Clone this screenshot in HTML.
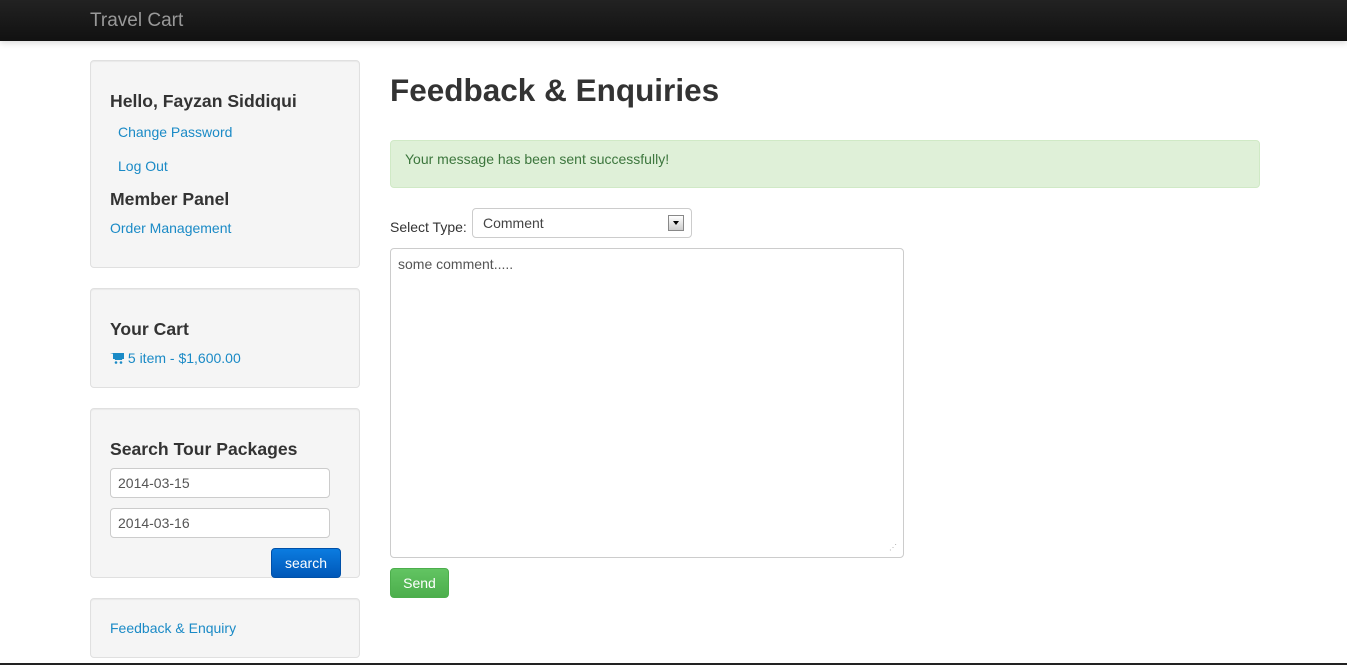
<!DOCTYPE html>
<html><head><style>
*{box-sizing:border-box;margin:0;padding:0}
body{width:1347px;height:665px;overflow:hidden;background:#fff;font-family:"Liberation Sans",Arial,sans-serif;font-size:14px;color:#333;position:relative}
.nav{position:absolute;left:0;top:0;width:1347px;height:41px;background:linear-gradient(#222,#111);box-shadow:0 2px 6px rgba(0,0,0,.15)}
.brand{position:absolute;left:90px;top:9px;font-size:19px;color:#999}
.well{position:absolute;left:90px;width:270px;background:#f5f5f5;border:1px solid #e0e0e0;border-radius:4px;box-shadow:inset 0 1px 1px rgba(0,0,0,.05)}
.abs{position:absolute}
h4{font-size:17.6px;font-weight:bold;color:#333;position:absolute}
a{color:#1a8ac6;text-decoration:none;position:absolute;font-size:14px}
.inp{position:absolute;left:19px;width:220px;height:30px;border:1px solid #ccc;border-radius:4px;background:#fff;padding:6px 7px;font-size:14px;color:#555}
</style></head><body>
<div class="nav"><div class="brand" style="top:10px">Travel Cart</div></div>

<div class="well" style="top:60px;height:208px">
<h4 style="left:19px;top:30px">Hello, Fayzan Siddiqui</h4>
<a style="left:27px;top:63px">Change Password</a>
<a style="left:27px;top:97px">Log Out</a>
<h4 style="left:19px;top:128px">Member Panel</h4>
<a style="left:19px;top:159px">Order Management</a>
</div>

<div class="well" style="top:288px;height:100px">
<h4 style="left:19px;top:30px">Your Cart</h4>
<a style="left:19px;top:61px"><svg width="14" height="12" viewBox="0 0 14 12" style="vertical-align:-1px"><path d="M0 1h3l2 7h7l2-6H4" fill="#1a8ac6"/><rect x="3" y="1" width="11" height="6" fill="#1a8ac6"/><circle cx="6" cy="10.5" r="1.3" fill="#1a8ac6"/><circle cx="11" cy="10.5" r="1.3" fill="#1a8ac6"/></svg> 5 item - $1,600.00</a>
</div>

<div class="well" style="top:408px;height:170px">
<h4 style="left:19px;top:30px">Search Tour Packages</h4>
<div class="inp" style="top:59px">2014-03-15</div>
<div class="inp" style="top:99px">2014-03-16</div>
<div class="abs" style="left:180px;top:139px;width:70px;height:30px;border-radius:4px;background:linear-gradient(#0b7ce0,#0057b8);border:1px solid #0050a8;color:#fff;text-align:center;line-height:28px">search</div>
</div>

<div class="well" style="top:598px;height:60px">
<a style="left:19px;top:21px">Feedback &amp; Enquiry</a>
</div>

<div class="abs" style="left:390px;top:72px;font-size:31.5px;font-weight:bold;color:#333">Feedback &amp; Enquiries</div>
<div class="abs" style="left:390px;top:140px;width:870px;height:48px;background:#dff0d8;border:1px solid #d0e9c6;border-radius:4px;color:#3c763d;padding:10px 14px">Your message has been sent successfully!</div>
<div class="abs" style="left:390px;top:219px">Select Type:</div>
<div class="abs" style="left:472px;top:208px;width:220px;height:30px;border:1px solid #ccc;border-radius:4px;background:#fff;padding:6px 10px;color:#444">Comment
<div class="abs" style="left:195px;top:6px;width:16px;height:16px;border:1px solid #888;background:linear-gradient(#fff,#ccc)"><div style="margin:5px auto 0;width:0;height:0;border-left:3px solid transparent;border-right:3px solid transparent;border-top:4px solid #000"></div></div></div>
<div class="abs" style="left:390px;top:248px;width:514px;height:310px;border:1px solid #ccc;border-radius:4px;padding:7px 7px;color:#555;font-size:14px">some comment.....
<div class="abs" style="right:6px;bottom:5px;font-size:8px;color:#aaa">⋰</div></div>
<div class="abs" style="left:390px;top:568px;width:59px;height:30px;background:linear-gradient(#62c462,#4cae4c);border:1px solid #4cae4c;border-radius:4px;color:#fff;text-align:center;line-height:28px">Send</div>
<div class="abs" style="left:0;top:663px;width:1347px;height:2px;background:#222"></div>
</body></html>
